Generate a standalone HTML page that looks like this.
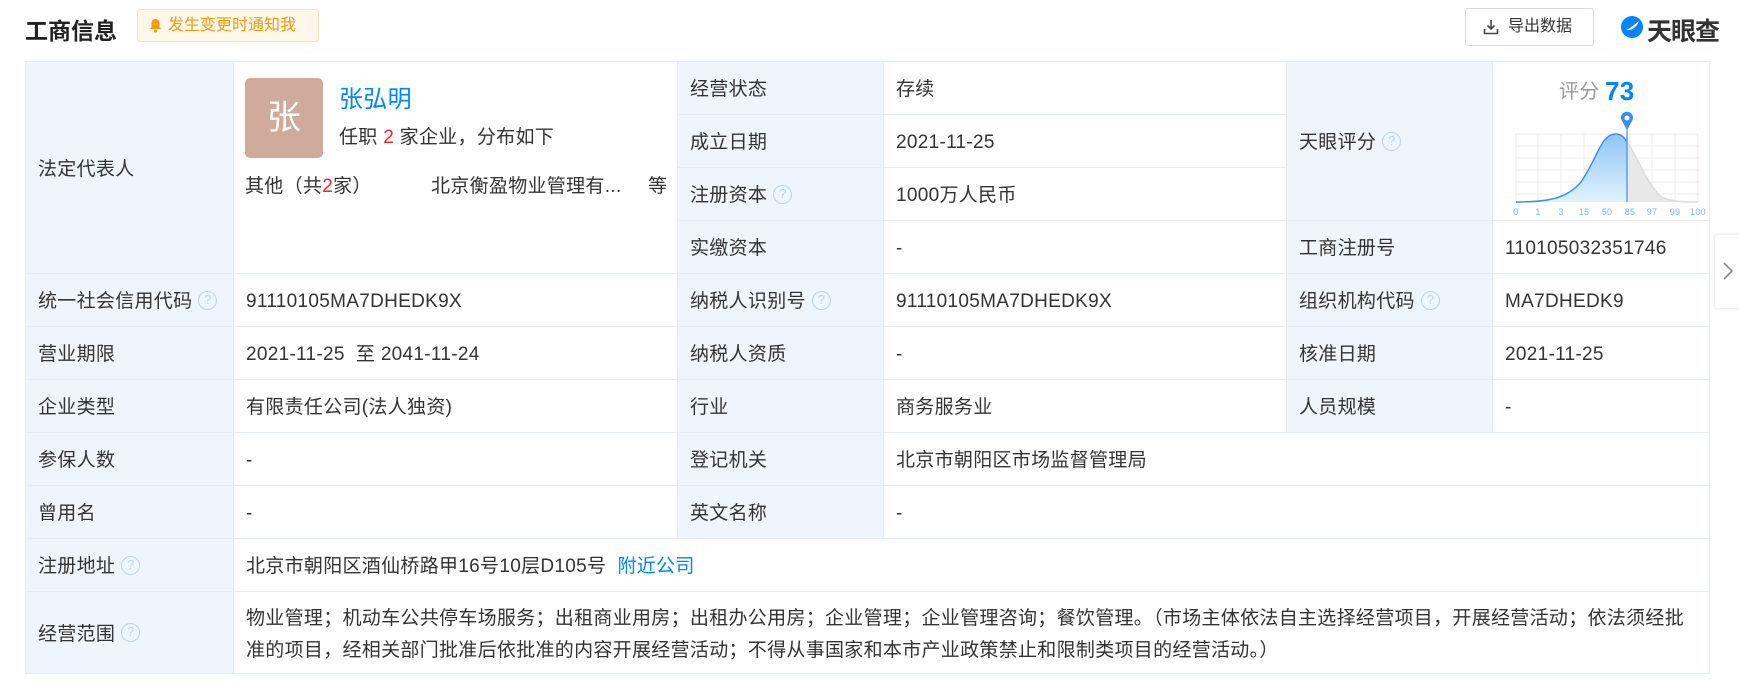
<!DOCTYPE html>
<html><head><meta charset="utf-8">
<style>
*{margin:0;padding:0;box-sizing:border-box}
body{width:1739px;height:684px;background:#fff;font-family:"Liberation Sans","Noto Sans CJK SC",sans-serif;color:#333;position:relative;overflow:hidden;font-size:19px;letter-spacing:0.3px}
.title{position:absolute;left:25px;top:12px;font-size:23px;font-weight:bold;color:#222;letter-spacing:0}
.notify{position:absolute;left:137px;top:9px;width:182px;height:33px;border:1px solid #fde3bd;background:#fff7ea;border-radius:3px;color:#f39c12;font-size:16px;line-height:31px;padding-left:30px;letter-spacing:0}
.notify svg{position:absolute;left:11px;top:8px}
.export{position:absolute;left:1465px;top:8px;width:129px;height:38px;border:1px solid #d8d8d8;border-radius:3px;font-size:16px;line-height:36px;padding-left:42px;color:#333;letter-spacing:0}
.export svg{position:absolute;left:17px;top:10px}
.logo{position:absolute;left:1620px;top:12px;font-size:25px;font-weight:bold;color:#333;letter-spacing:-1px}
.logo svg{position:absolute;left:0;top:3px}
table{position:absolute;left:25px;top:61px;border-collapse:collapse;table-layout:fixed;width:1684px}
td{border:1px solid #e4ecf5;padding:4px 0 0 12px;height:53px;vertical-align:middle;line-height:24px;white-space:nowrap}
td.l{background:#eef5fd;color:#333}
.q{display:inline-block;width:19px;height:19px;border:1.5px solid #b7d3ef;border-radius:50%;color:#b7d3ef;font-size:13px;line-height:16px;text-align:center;vertical-align:middle;margin-left:6px;letter-spacing:0;margin-top:-3px}
a{color:#0084ff;text-decoration:none}
.arrow{position:absolute;left:1715px;top:235px;width:30px;height:73px;background:#fff;box-shadow:0 0 4px rgba(0,0,0,.15);border-radius:3px}
</style></head><body>
<div class="title">工商信息</div>
<div class="notify"><svg width="13" height="15" viewBox="0 0 13 15"><path d="M6.5 1C4 1 2.5 3 2.5 5.5V9L1 11h11l-1.5-2V5.5C10.5 3 9 1 6.5 1z" fill="#f39c12"/><circle cx="6.5" cy="13" r="1.6" fill="#f39c12"/></svg>发生变更时通知我</div>
<div class="export"><svg width="16" height="16" viewBox="0 0 16 16" fill="none" stroke="#444" stroke-width="1.6"><path d="M8 1v9M4.5 6.5L8 10l3.5-3.5M1.5 10v4.5h13V10"/></svg>导出数据</div>
<div class="logo"><svg width="24" height="24" viewBox="0 0 24 24"><circle cx="12" cy="12" r="11" fill="#0084ff"/><path d="M6 15c3-1 8-5 13-9-2 5-6 10-13 9z" fill="#fff"/></svg><span style="margin-left:27px">天眼查</span></div>
<table>
<colgroup><col style="width:208px"><col style="width:444px"><col style="width:206px"><col style="width:403px"><col style="width:206px"><col style="width:217px"></colgroup>
<tr><td class="l" rowspan="4">法定代表人</td>
<td rowspan="4" style="vertical-align:top;padding:0;position:relative">
<div style="position:absolute;left:11px;top:16px;width:78px;height:80px;background:#d0ab9b;border-radius:5px;color:#fff;font-size:34px;line-height:80px;text-align:center">张</div>
<div style="position:absolute;left:105px;top:26px;color:#0084ff;font-size:24px">张弘明</div>
<div style="position:absolute;left:105px;top:64px">任职 <span style="color:#f5222d">2</span> 家企业，分布如下</div>
<div style="position:absolute;left:11px;top:113px">其他（共<span style="color:#f5222d">2</span>家）</div>
<div style="position:absolute;left:197px;top:113px">北京衡盈物业管理有...</div>
<div style="position:absolute;left:414px;top:113px">等</div>
</td>
<td class="l">经营状态</td><td>存续</td>
<td class="l" rowspan="3">天眼评分<span class="q">?</span></td>
<td rowspan="3" style="padding:0;position:relative">
<svg width="216" height="165" viewBox="0 0 216 165" style="position:absolute;left:0;top:0">
<text x="66" y="36" font-size="20" fill="#999" font-family="Liberation Sans,Noto Sans CJK SC,sans-serif">评分</text>
<text x="112" y="38" font-size="26" font-weight="bold" fill="#0084ff" font-family="Liberation Sans,sans-serif">73</text>
<g stroke="#eee" stroke-width="1">
<path d="M23 72H205M23 84H205M23 96H205M23 108H205M23 120H205M23 132H205"/>
<path d="M23 72V140M45 72V140M68 72V140M91 72V140M114 72V140M137 72V140M159 72V140M182 72V140M205 72V140"/></g>
<defs><linearGradient id="g" x1="0" y1="0" x2="0" y2="1"><stop offset="0" stop-color="#8ec5f7"/><stop offset="1" stop-color="#e2f2fd"/></linearGradient></defs>
<path d="M23 140C60 140 75 135 88 120C105 95 108 72 123 72C128 72 131 75 134 80L134 140Z" fill="url(#g)"/>
<path d="M134 80C145 95 155 125 170 136C180 140 195 140 205 140L134 140Z" fill="#e8e8e8"/>
<path d="M23 140C60 140 75 135 88 120C105 95 108 72 123 72C128 72 131 75 134 80" fill="none" stroke="#3d8ef0" stroke-width="1.5"/>
<path d="M134 80C145 95 155 125 170 136C180 140 195 140 205 140" fill="none" stroke="#ddd" stroke-width="1.5"/>
<line x1="134" y1="60" x2="134" y2="140" stroke="#3d8ef0" stroke-width="1.2"/>
<path d="M134 68L129 59A6 6 0 1 1 139 59Z" fill="#3d8ef0"/><circle cx="134" cy="56" r="2.5" fill="#fff"/>
<g font-size="9" fill="#7fb5ef" font-family="Liberation Sans,sans-serif" text-anchor="middle">
<text x="23" y="153">0</text><text x="45" y="153">1</text><text x="68" y="153">3</text><text x="91" y="153">15</text><text x="114" y="153">50</text><text x="137" y="153">85</text><text x="159" y="153">97</text><text x="182" y="153">99</text><text x="205" y="153">100</text></g>
</svg></td></tr>
<tr><td class="l">成立日期</td><td>2021-11-25</td></tr>
<tr><td class="l">注册资本<span class="q">?</span></td><td>1000万人民币</td></tr>
<tr><td class="l">实缴资本</td><td>-</td><td class="l">工商注册号</td><td>110105032351746</td></tr>
<tr><td class="l">统一社会信用代码<span class="q">?</span></td><td>91110105MA7DHEDK9X</td><td class="l">纳税人识别号<span class="q">?</span></td><td>91110105MA7DHEDK9X</td><td class="l">组织机构代码<span class="q">?</span></td><td>MA7DHEDK9</td></tr>
<tr><td class="l">营业期限</td><td>2021-11-25&nbsp;&nbsp;至 2041-11-24</td><td class="l">纳税人资质</td><td>-</td><td class="l">核准日期</td><td>2021-11-25</td></tr>
<tr><td class="l">企业类型</td><td>有限责任公司(法人独资)</td><td class="l">行业</td><td>商务服务业</td><td class="l">人员规模</td><td>-</td></tr>
<tr><td class="l">参保人数</td><td>-</td><td class="l">登记机关</td><td colspan="3">北京市朝阳区市场监督管理局</td></tr>
<tr><td class="l">曾用名</td><td>-</td><td class="l">英文名称</td><td colspan="3">-</td></tr>
<tr><td class="l">注册地址<span class="q">?</span></td><td colspan="5">北京市朝阳区酒仙桥路甲16号10层D105号&nbsp;&nbsp;<a>附近公司</a></td></tr>
<tr><td class="l" style="height:82px">经营范围<span class="q">?</span></td><td colspan="5" style="line-height:32px;padding-right:10px;white-space:normal">物业管理；机动车公共停车场服务；出租商业用房；出租办公用房；企业管理；企业管理咨询；餐饮管理。（市场主体依法自主选择经营项目，开展经营活动；依法须经批准的项目，经相关部门批准后依批准的内容开展经营活动；不得从事国家和本市产业政策禁止和限制类项目的经营活动。）</td></tr>
</table>
<div class="arrow"><svg width="24" height="73" viewBox="0 0 24 73"><path d="M9 28l8 8-8 8" fill="none" stroke="#888" stroke-width="1.6"/></svg></div>
</body></html>
